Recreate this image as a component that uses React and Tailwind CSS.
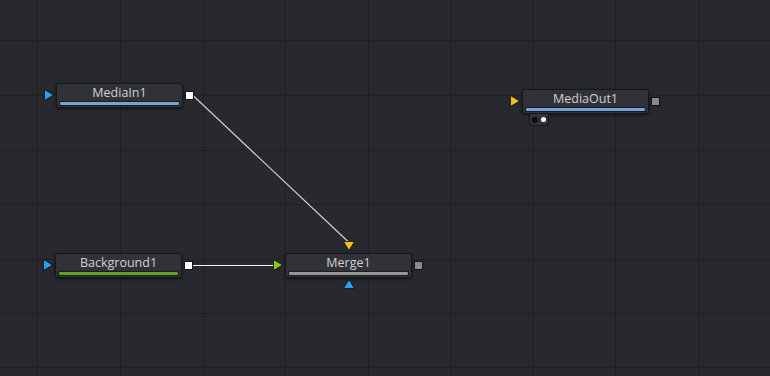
import React from "react";

const nodes = [
  { id: "in", label: "MediaIn1", x: 56, y: 83, bar: "bg-[#72a4da]", input: "blue", output: "white" },
  { id: "bg", label: "Background1", x: 55, y: 253, bar: "bg-[#62a026]", input: "blue", output: "white" },
  { id: "merge", label: "Merge1", x: 285, y: 253, bar: "bg-[#959595]", input: "green", output: "gray", merge: true },
  { id: "out", label: "MediaOut1", x: 522, y: 89, bar: "bg-[#72a4da]", input: "yellow", output: "gray", view: true },
];

const fills = {
  blue: "#2aa2ee",
  green: "#8cc81a",
  yellow: "#f5c013",
};

// port arrows, drawn with a thin dark outline
function Tri({ dir, color, className }) {
  const w = dir === "right" ? 10 : 12;
  const h = dir === "right" ? 12 : 10;
  const pts =
    dir === "right"
      ? "0.5,0.5 9.5,6 0.5,11.5"
      : dir === "down"
      ? "0.5,0.5 11.5,0.5 6,9.5"
      : "6,0.5 11.5,9.5 0.5,9.5";
  return (
    <svg className={className} width={w} height={h} viewBox={`0 0 ${w} ${h}`}>
      <polygon points={pts} fill={fills[color]} stroke="#0e0f11" strokeWidth="0.8" />
    </svg>
  );
}

function Node({ n }) {
  return (
    <div className="absolute" style={{ left: n.x, top: n.y }}>
      <div className="relative w-[127px] h-[25px] rounded-[3px] bg-[#313238] border border-[#16171a] shadow-[0_1px_3px_rgba(0,0,0,0.6)] flex flex-col items-stretch">
        <div className="h-[17px] flex items-center justify-center text-[12.5px] leading-none text-[#d0d0d2] pt-[1px]">
          {n.label}
        </div>
        <div className="mx-[2px] h-[5px] rounded-[1px] bg-[#1b1c1f] p-[1px]">
          <div className={`h-full rounded-[1px] ${n.bar}`} />
        </div>
        {n.view && (
          <div className="absolute left-[6px] top-[24px] w-[20px] h-[12px] rounded-b-[3px] bg-[#313238] border border-t-0 border-[#16171a] flex items-center justify-center gap-[3px]">
            <div className="w-[6px] h-[6px] rounded-full bg-[#0c0c0d]" />
            <div className="w-[5px] h-[5px] rounded-full bg-white" />
          </div>
        )}
      </div>
      <Tri dir="right" color={n.input} className="absolute left-[-12px] top-[6px]" />
      <div
        className={`absolute left-[129px] top-[8px] w-[9px] h-[9px] border border-[#111214] ${
          n.output === "white" ? "bg-white" : "bg-[#8a8a8a]"
        }`}
      />
      {n.merge && (
        <>
          <Tri dir="down" color="yellow" className="absolute left-[58px] top-[-12px]" />
          <Tri dir="up" color="blue" className="absolute left-[58px] top-[26px]" />
        </>
      )}
    </div>
  );
}

export default function App() {
  const vx = [37, 120, 203, 285, 368, 450, 533, 615, 698];
  const hy = [40, 95, 150, 204, 259, 313, 367];
  return (
    <div
      className="relative w-[770px] h-[376px] overflow-hidden bg-[#28292e]"
      style={{ fontFamily: '"Open Sans", "Noto Sans", sans-serif' }}
    >
      <svg className="absolute inset-0" width="770" height="376">
        {vx.map((x) => (
          <line key={"v" + x} x1={x + 0.5} y1="0" x2={x + 0.5} y2="376" stroke="#1f2024" strokeWidth="1" />
        ))}
        {hy.map((y) => (
          <line key={"h" + y} x1="0" y1={y + 0.5} x2="770" y2={y + 0.5} stroke="#1f2024" strokeWidth="1" />
        ))}
        <line x1="193" y1="95.5" x2="348.5" y2="242" stroke="#cfcfcf" strokeWidth="1.2" />
        <line x1="192" y1="265.5" x2="276" y2="265.5" stroke="#f2f2f2" strokeWidth="1.2" />
      </svg>
      {nodes.map((n) => (
        <Node key={n.id} n={n} />
      ))}
    </div>
  );
}
